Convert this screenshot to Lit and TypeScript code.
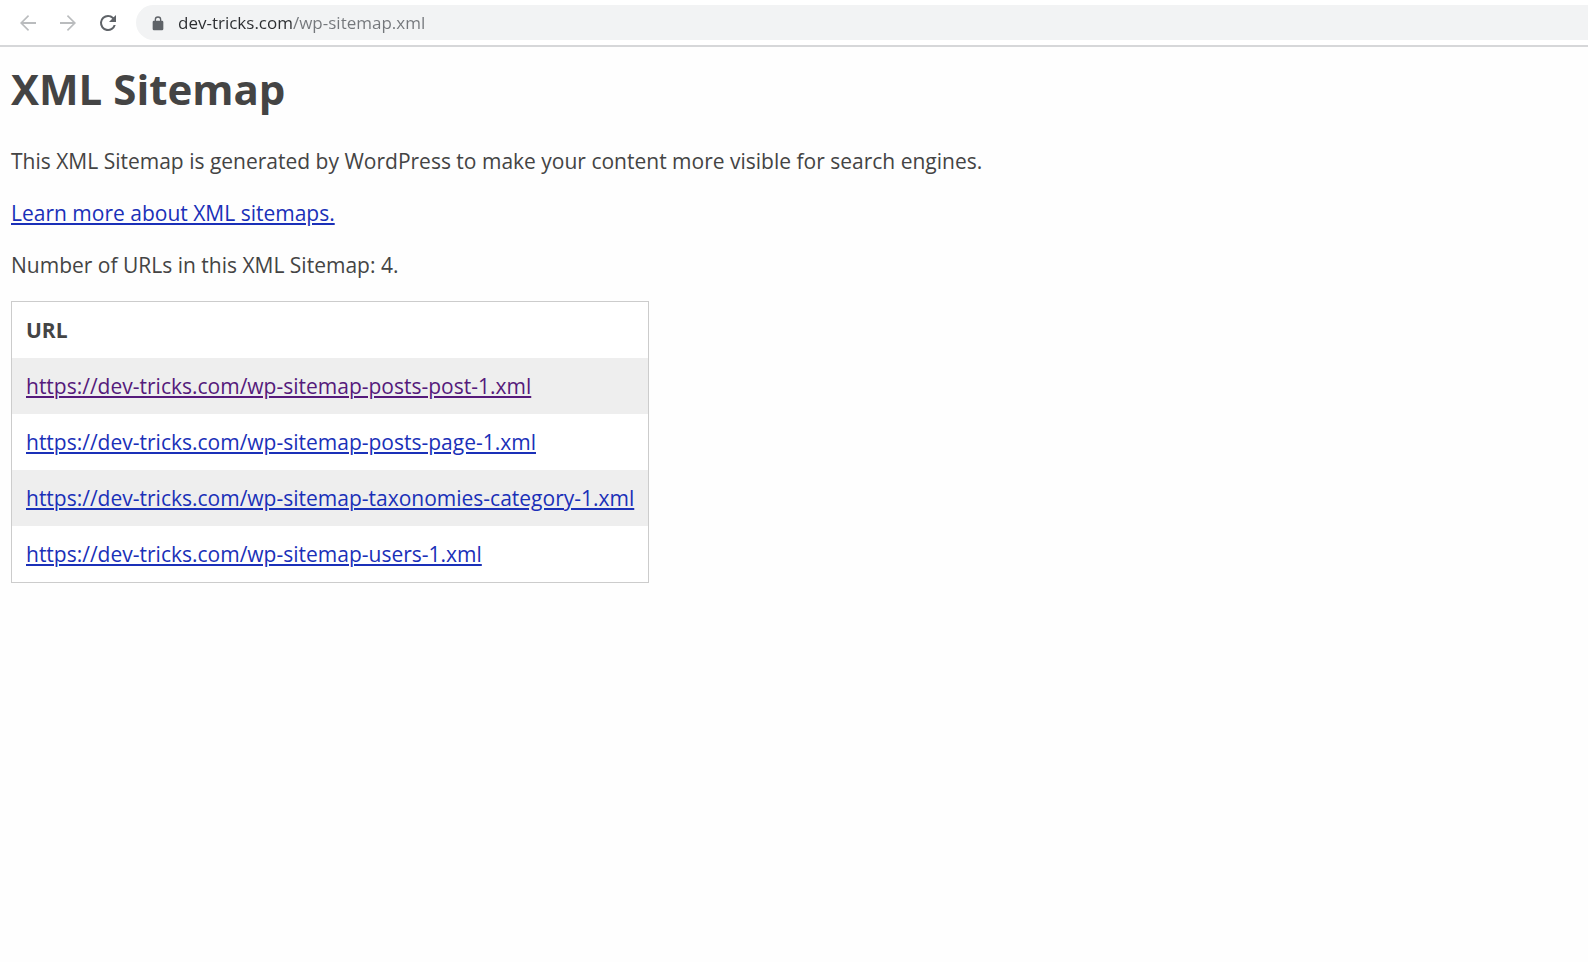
import { LitElement, html, css } from "lit";
import { customElement, state } from "lit/decorators.js";
import { classMap } from "lit/directives/class-map.js";

interface SitemapEntry {
  url: string;
  seen: boolean;
}

@customElement("browser-bar")
class BrowserBar extends LitElement {
  static styles = css`
    :host {
      display: block;
    }
    .bar {
      display: flex;
      align-items: center;
      gap: 16px;
      padding: 5px 0 5px 16px;
      background: #fff;
      border-bottom: 2px solid #d6d7d9;
    }
    .nav {
      display: flex;
      width: 24px;
      height: 24px;
      padding: 0;
      border: 0;
      background: none;
      color: #5f6368;
    }
    .nav:disabled {
      color: #babcbe;
    }
    .icon {
      width: 24px;
      height: 24px;
      fill: currentColor;
    }
    .address {
      display: flex;
      flex: 1;
      align-items: center;
      gap: 12px;
      height: 35px;
      padding-left: 14px;
      border-radius: 18px 0 0 18px;
      background: #f2f3f4;
    }
    .lock {
      width: 16px;
      height: 16px;
      fill: #5f6368;
    }
    .url {
      flex: 1;
      min-width: 0;
      padding: 0;
      border: 0;
      outline: 0;
      font: 17px/24px "Open Sans", "Noto Sans", sans-serif;
      color: #74777b;
      background: linear-gradient(to right, #2b2d30 114px, #74777b 114px);
      background-clip: text;
      -webkit-background-clip: text;
      -webkit-text-fill-color: transparent;
    }
  `;

  render() {
    return html`
      <nav class="bar" aria-label="Browser">
        <button class="nav" aria-label="Back" disabled>
          <svg class="icon" viewBox="0 0 24 24"><path d="M20 11H7.3l5.8-5.8L12 4 4 12l8 8 1.1-1.2L7.3 13H20z" /></svg>
        </button>
        <button class="nav" aria-label="Forward" disabled>
          <svg class="icon" viewBox="0 0 24 24"><path d="M4 11h12.7l-5.8-5.8L12 4l8 8-8 8-1.1-1.2 5.8-5.8H4z" /></svg>
        </button>
        <button class="nav" aria-label="Reload">
          <svg class="icon" viewBox="0 0 24 24"><path d="M17.65 6.35A7.96 7.96 0 0 0 12 4a8 8 0 1 0 7.73 10h-2.08A6 6 0 1 1 12 6c1.66 0 3.14.69 4.22 1.78L13 11h7V4z" /></svg>
        </button>
        <div class="address">
          <svg class="lock" viewBox="0 0 24 24"><path d="M18 8.5h-1V7A5 5 0 0 0 7 7v1.5H6a2 2 0 0 0-2 2V21a2 2 0 0 0 2 2h12a2 2 0 0 0 2-2V10.5a2 2 0 0 0-2-2zM9 7a3 3 0 0 1 6 0v1.5H9z" /></svg>
          <input class="url" type="text" aria-label="Address" spellcheck="false" value="dev-tricks.com/wp-sitemap.xml" />
        </div>
      </nav>
    `;
  }
}

@customElement("app-root")
class AppRoot extends LitElement {
  static styles = css`
    :host {
      display: block;
      min-height: 100vh;
      background: #fefefe;
      color: #444;
      font: 21px/32px "Open Sans", "Noto Sans", sans-serif;
    }
    .content {
      padding: 12px 11px;
    }
    .title {
      margin: 0 0 26px;
      font-size: 42px;
      line-height: 60px;
      font-weight: 700;
    }
    .text {
      margin: 0 0 20px;
    }
    .link {
      color: #1a30b8;
      text-decoration-thickness: 2px;
      text-underline-offset: 2px;
    }
    .seen {
      color: #551a7b;
    }
    .urls {
      border: 1px solid #ccc;
      border-spacing: 0;
      background: #fff;
    }
    .cell {
      padding: 12px 14px;
      text-align: left;
    }
    .row:nth-child(odd) {
      background: #eee;
    }
  `;

  @state()
  private entries: SitemapEntry[] = [
    { url: "https://dev-tricks.com/wp-sitemap-posts-post-1.xml", seen: true },
    { url: "https://dev-tricks.com/wp-sitemap-posts-page-1.xml", seen: false },
    { url: "https://dev-tricks.com/wp-sitemap-taxonomies-category-1.xml", seen: false },
    { url: "https://dev-tricks.com/wp-sitemap-users-1.xml", seen: false },
  ];

  render() {
    return html`
      <browser-bar></browser-bar>
      <main class="content">
        <h1 class="title">XML Sitemap</h1>
        <p class="text">This XML Sitemap is generated by WordPress to make your content more visible for search engines.</p>
        <p class="text"><a class="link" href="#about">Learn more about XML sitemaps.</a></p>
        <p class="text">Number of URLs in this XML Sitemap: ${this.entries.length}.</p>
        <table class="urls">
          <thead>
            <tr><th class="cell" scope="col">URL</th></tr>
          </thead>
          <tbody>
            ${this.entries.map(
              (entry) => html`<tr class="row">
                <td class="cell"><a class=${classMap({ link: true, seen: entry.seen })} href="#${entry.url}">${entry.url}</a></td>
              </tr>`
            )}
          </tbody>
        </table>
      </main>
    `;
  }
}
